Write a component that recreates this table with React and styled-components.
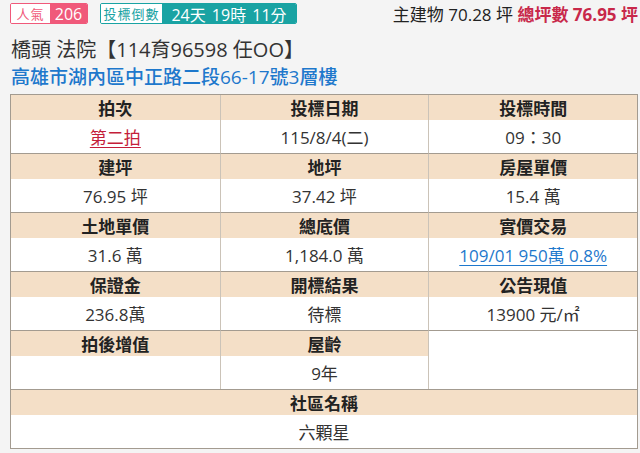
import React from 'react';
import styled, {createGlobalStyle} from 'styled-components';

const GlobalStyle = createGlobalStyle`
  body {
    margin: 0;
    background: #f4f4f4;
    font-family: "Open Sans", "Noto Sans CJK TC", sans-serif;
    color: #333;
  }
`

const Page = styled.div`
  padding: 3px 2px 0 10px;
`

const TopRow = styled.div`
  display: flex;
  justify-content: space-between;
  align-items: center;
  height: 21px;
`

const Badges = styled.div`
  display: flex;
  gap: 12px;
`

const Badge = styled.div`
  display: flex;
  height: 21px;
  border: 1px solid ${p => p.$color};
  border-radius: 2px;
  box-sizing: border-box;
  overflow: hidden;
`

const BadgeLabel = styled.span`
  display: flex;
  align-items: center;
  justify-content: center;
  width: ${p => p.$w}px;
  background: #fff;
  color: ${p => p.$color};
  font-size: 13px;
  letter-spacing: 1px;
`

const BadgeValue = styled.span`
  display: flex;
  align-items: center;
  justify-content: center;
  width: ${p => p.$w}px;
  background: ${p => p.$color};
  color: #fff;
  font-size: 16px;
  word-spacing: 2px;
`

const Area = styled.div`
  font-size: 17px;
  color: #222;
  white-space: nowrap;
`

const Total = styled.span`
  color: #c8284a;
  font-weight: 700;
`

const Title = styled.h1`
  margin: 13px 0 0 1px;
  font-size: 20px;
  line-height: 26px;
  font-weight: 400;
  color: #333;
`

const Address = styled.div`
  margin: 1px 0 0 1px;
  font-size: 19px;
  line-height: 26px;
  font-weight: 500;
  color: #1e78cc;
`

const Table = styled.div`
  margin-top: 4px;
  display: grid;
  grid-template-columns: repeat(3, 1fr);
  border: 1px solid #a39b90;
  background: #fff;
`

const Field = styled.div`
  grid-column: ${p => (p.$wide ? '1 / -1' : 'auto')};
  border-top: ${p => (p.$top ? 'none' : '1px solid #a39b90')};
  border-left: ${p => (p.$first ? 'none' : '1px solid #cbc3b8')};
  display: flex;
  flex-direction: column;
`

const Head = styled.div`
  height: 25px;
  display: flex;
  align-items: center;
  justify-content: center;
  background: #f4dfc7;
  font-family: "Noto Sans CJK TC", sans-serif;
  font-size: 17px;
  font-weight: 700;
  color: #222;
`

const Value = styled.div`
  height: 33px;
  display: flex;
  align-items: center;
  justify-content: center;
  font-size: 17px;
  color: ${p => p.$link || '#333'};
  a {
    color: inherit;
    text-decoration: underline;
    text-underline-offset: 3px;
  }
`

const rows = [
  [
    {head: '拍次', value: '第二拍', link: '#c41e3a'},
    {head: '投標日期', value: '115/8/4(二)'},
    {head: '投標時間', value: '09：30'},
  ],
  [
    {head: '建坪', value: '76.95 坪'},
    {head: '地坪', value: '37.42 坪'},
    {head: '房屋單價', value: '15.4 萬'},
  ],
  [
    {head: '土地單價', value: '31.6 萬'},
    {head: '總底價', value: '1,184.0 萬'},
    {head: '實價交易', value: '109/01 950萬 0.8%', link: '#1e78cc'},
  ],
  [
    {head: '保證金', value: '236.8萬'},
    {head: '開標結果', value: '待標'},
    {head: '公告現值', value: '13900 元/㎡'},
  ],
  [
    {head: '拍後增值', value: ''},
    {head: '屋齡', value: '9年'},
    {empty: true},
  ],
  [{head: '社區名稱', value: '六顆星', wide: true}],
];

export default function App() {
  return (
    <Page>
      <GlobalStyle />
      <TopRow>
        <Badges>
          <Badge $color="#f0597a">
            <BadgeLabel $color="#f0597a" $w={39}>人氣</BadgeLabel>
            <BadgeValue $color="#f0597a" $w={37}>206</BadgeValue>
          </Badge>
          <Badge $color="#19a3a3">
            <BadgeLabel $color="#19a3a3" $w={61}>投標倒數</BadgeLabel>
            <BadgeValue $color="#19a3a3" $w={134}>24天 19時 11分</BadgeValue>
          </Badge>
        </Badges>
        <Area>
          主建物 70.28 坪 <Total>總坪數 76.95 坪</Total>
        </Area>
      </TopRow>
      <Title>橋頭 法院【114育96598 任OO】</Title>
      <Address>高雄市湖內區中正路二段66-17號3層樓</Address>
      <Table>
        {rows.map((row, r) =>
          row.map((f, c) => (
            <Field key={`${r}-${c}`} $top={r === 0} $first={c === 0} $wide={f.wide}>
              {!f.empty && (
                <>
                  <Head>{f.head}</Head>
                  <Value $link={f.link}>
                    {f.link ? <a>{f.value}</a> : f.value}
                  </Value>
                </>
              )}
            </Field>
          ))
        )}
      </Table>
    </Page>
  );
}
